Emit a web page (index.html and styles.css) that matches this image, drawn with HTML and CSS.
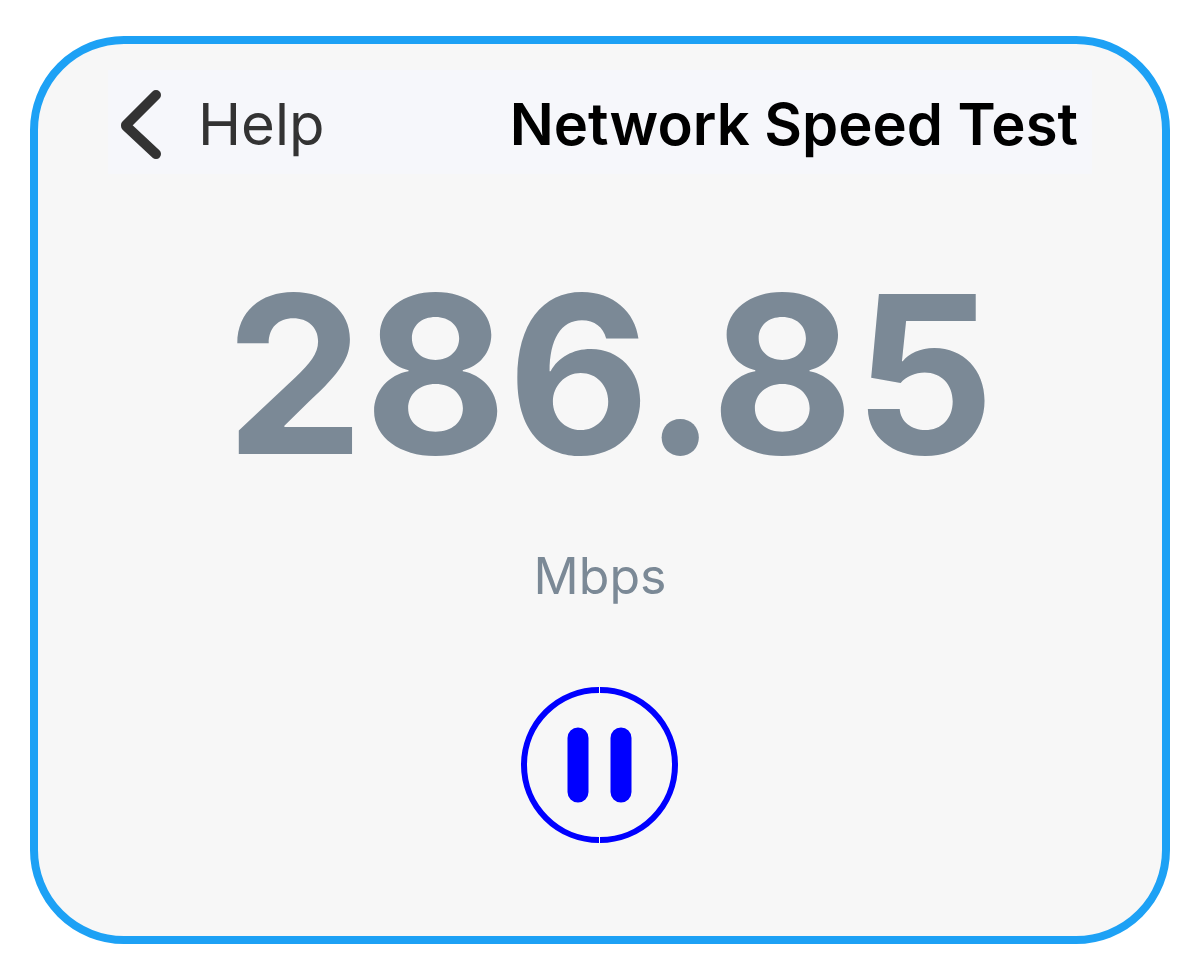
FILE: index.html
```html
<!DOCTYPE html>
<html lang="en">
<head>
    <meta charset="UTF-8">
    <meta name="viewport" content="width=device-width, initial-scale=1.0">
    <title>Network Speed Test</title>
    <link rel="stylesheet" href="styles.css">
</head>
<body>
    <div class="card">
        <header class="nav-bar">
            <a href="#" class="back-link">
                <svg class="back-icon" width="42" height="70" viewBox="0 0 42 70" aria-hidden="true">
                    <path d="M36 6 L6 36 V37 L36 65" />
                </svg>
                <span>Help</span>
            </a>
            <h1>Network Speed Test</h1>
        </header>

        <main class="result">
            <div class="speed">286.85</div>
            <div class="unit">Mbps</div>
            <button type="button" class="pause-btn" aria-label="Pause">
                <svg width="158" height="158" viewBox="0 0 158 158" aria-hidden="true">
                    <path class="ring" d="M78 4 A75 75 0 0 0 78 154 M79 4 A75 75 0 0 1 79 154" />
                    <path class="bars" d="M57 52 V106 M100 52 V106" />
                </svg>
            </button>
        </main>
    </div>
</body>
</html>
```

FILE: styles.css
```css
* {
    box-sizing: border-box;
}

body {
    margin: 0;
    padding: 36px 30px 30px;
    background: #fff;
    font-family: Inter, "Liberation Sans", sans-serif;
}

.card {
    padding: 26px 70px 92px;
    background: #f7f7f7;
    border: 8px solid #1da1f5;
    border-radius: 94px;
}

.nav-bar {
    display: flex;
    align-items: center;
    justify-content: space-between;
    height: 104px;
    padding: 4px 14px 0 12px;
    background: #f6f7fb;
}

.back-link {
    display: flex;
    align-items: center;
    gap: 36px;
    color: #333;
    font-size: 58px;
    text-decoration: none;
}

.back-icon path {
    fill: none;
    stroke: #333;
    stroke-width: 10;
    stroke-linecap: round;
    stroke-linejoin: round;
}

h1 {
    margin: 0;
    color: #000;
    font-size: 58px;
    font-weight: 600;
}

.result {
    display: flex;
    flex-direction: column;
    align-items: center;
    padding-top: 80px;
}

.speed {
    padding-left: 20px;
    color: #7b8996;
    font-size: 220px;
    font-weight: 700;
    line-height: 240px;
}

.unit {
    margin-top: 52px;
    color: #7b8996;
    font-size: 50px;
    line-height: 60px;
}

.pause-btn {
    margin-top: 80px;
    padding: 0;
    background: none;
    border: none;
    cursor: pointer;
}

.pause-btn svg {
    display: block;
}

.ring,
.bars {
    fill: none;
    stroke: #00f;
}

.ring {
    stroke-width: 6;
}

.bars {
    stroke-width: 21;
    stroke-linecap: round;
}
```
